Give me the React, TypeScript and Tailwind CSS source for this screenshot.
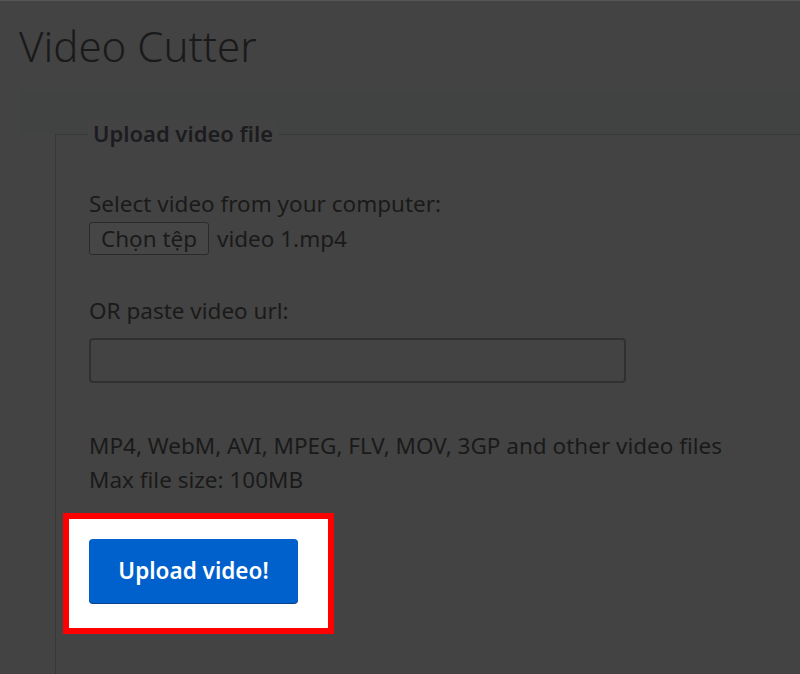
import React from "react";

export default function App() {
  return (
    <div
      className="w-[800px] h-[674px] overflow-hidden bg-[#434343] border-t border-[#555] text-[#1a1a1a]"
      style={{ fontFamily: '"Noto Sans", "Open Sans", sans-serif' }}
    >
      <h1 className="pl-[19px] pt-[21px] text-[42px] leading-[48px] font-light text-[#1a1a1a]">
        Video Cutter
      </h1>

      <div className="mt-[20px] h-[44px] ml-[20px] bg-[#414342]" />

      <div className="ml-[55px] border-l border-[#383838] h-[540px] relative">
        <div className="border-t border-[#393939] w-[745px]" />
        <div className="absolute -top-[15px] left-[32px] bg-[#434343] px-[5px] text-[22px] leading-[28px] font-semibold text-[#1c1c20]">
          Upload video file
        </div>

        <div className="pl-[33px] pt-[55px] text-[22.5px] leading-[28px]">
          <p>Select video from your computer:</p>
          <div className="flex items-center gap-[8px] mt-[4px]">
            <span className="w-[120px] h-[33px] flex items-center justify-center border border-[#2a2a2a] rounded-[3px] bg-[#464646]">
              Chọn tệp
            </span>
            <span>video 1.mp4</span>
          </div>

          <p className="mt-[42px]">OR paste video url:</p>
          <div className="mt-[13px] w-[537px] h-[45px] border-2 border-[#303030] rounded-[4px]" />

          <p className="mt-[49px]">MP4, WebM, AVI, MPEG, FLV, MOV, 3GP and other video files</p>
          <p className="mt-[6px]">Max file size: 100MB</p>

          <div className="-ml-[26px] mt-[19px] w-[271px] h-[121px] border-[6px] border-[#ff0000] bg-white pl-[20px] pt-[20px]">
            <div className="w-[209px] h-[64px] bg-[#0061cd] rounded-[4px] shadow-[0_1px_0_#0a3f8a] flex items-center justify-center text-white text-[22.5px] font-semibold">
              Upload video!
            </div>
          </div>
        </div>
      </div>
    </div>
  );
}
